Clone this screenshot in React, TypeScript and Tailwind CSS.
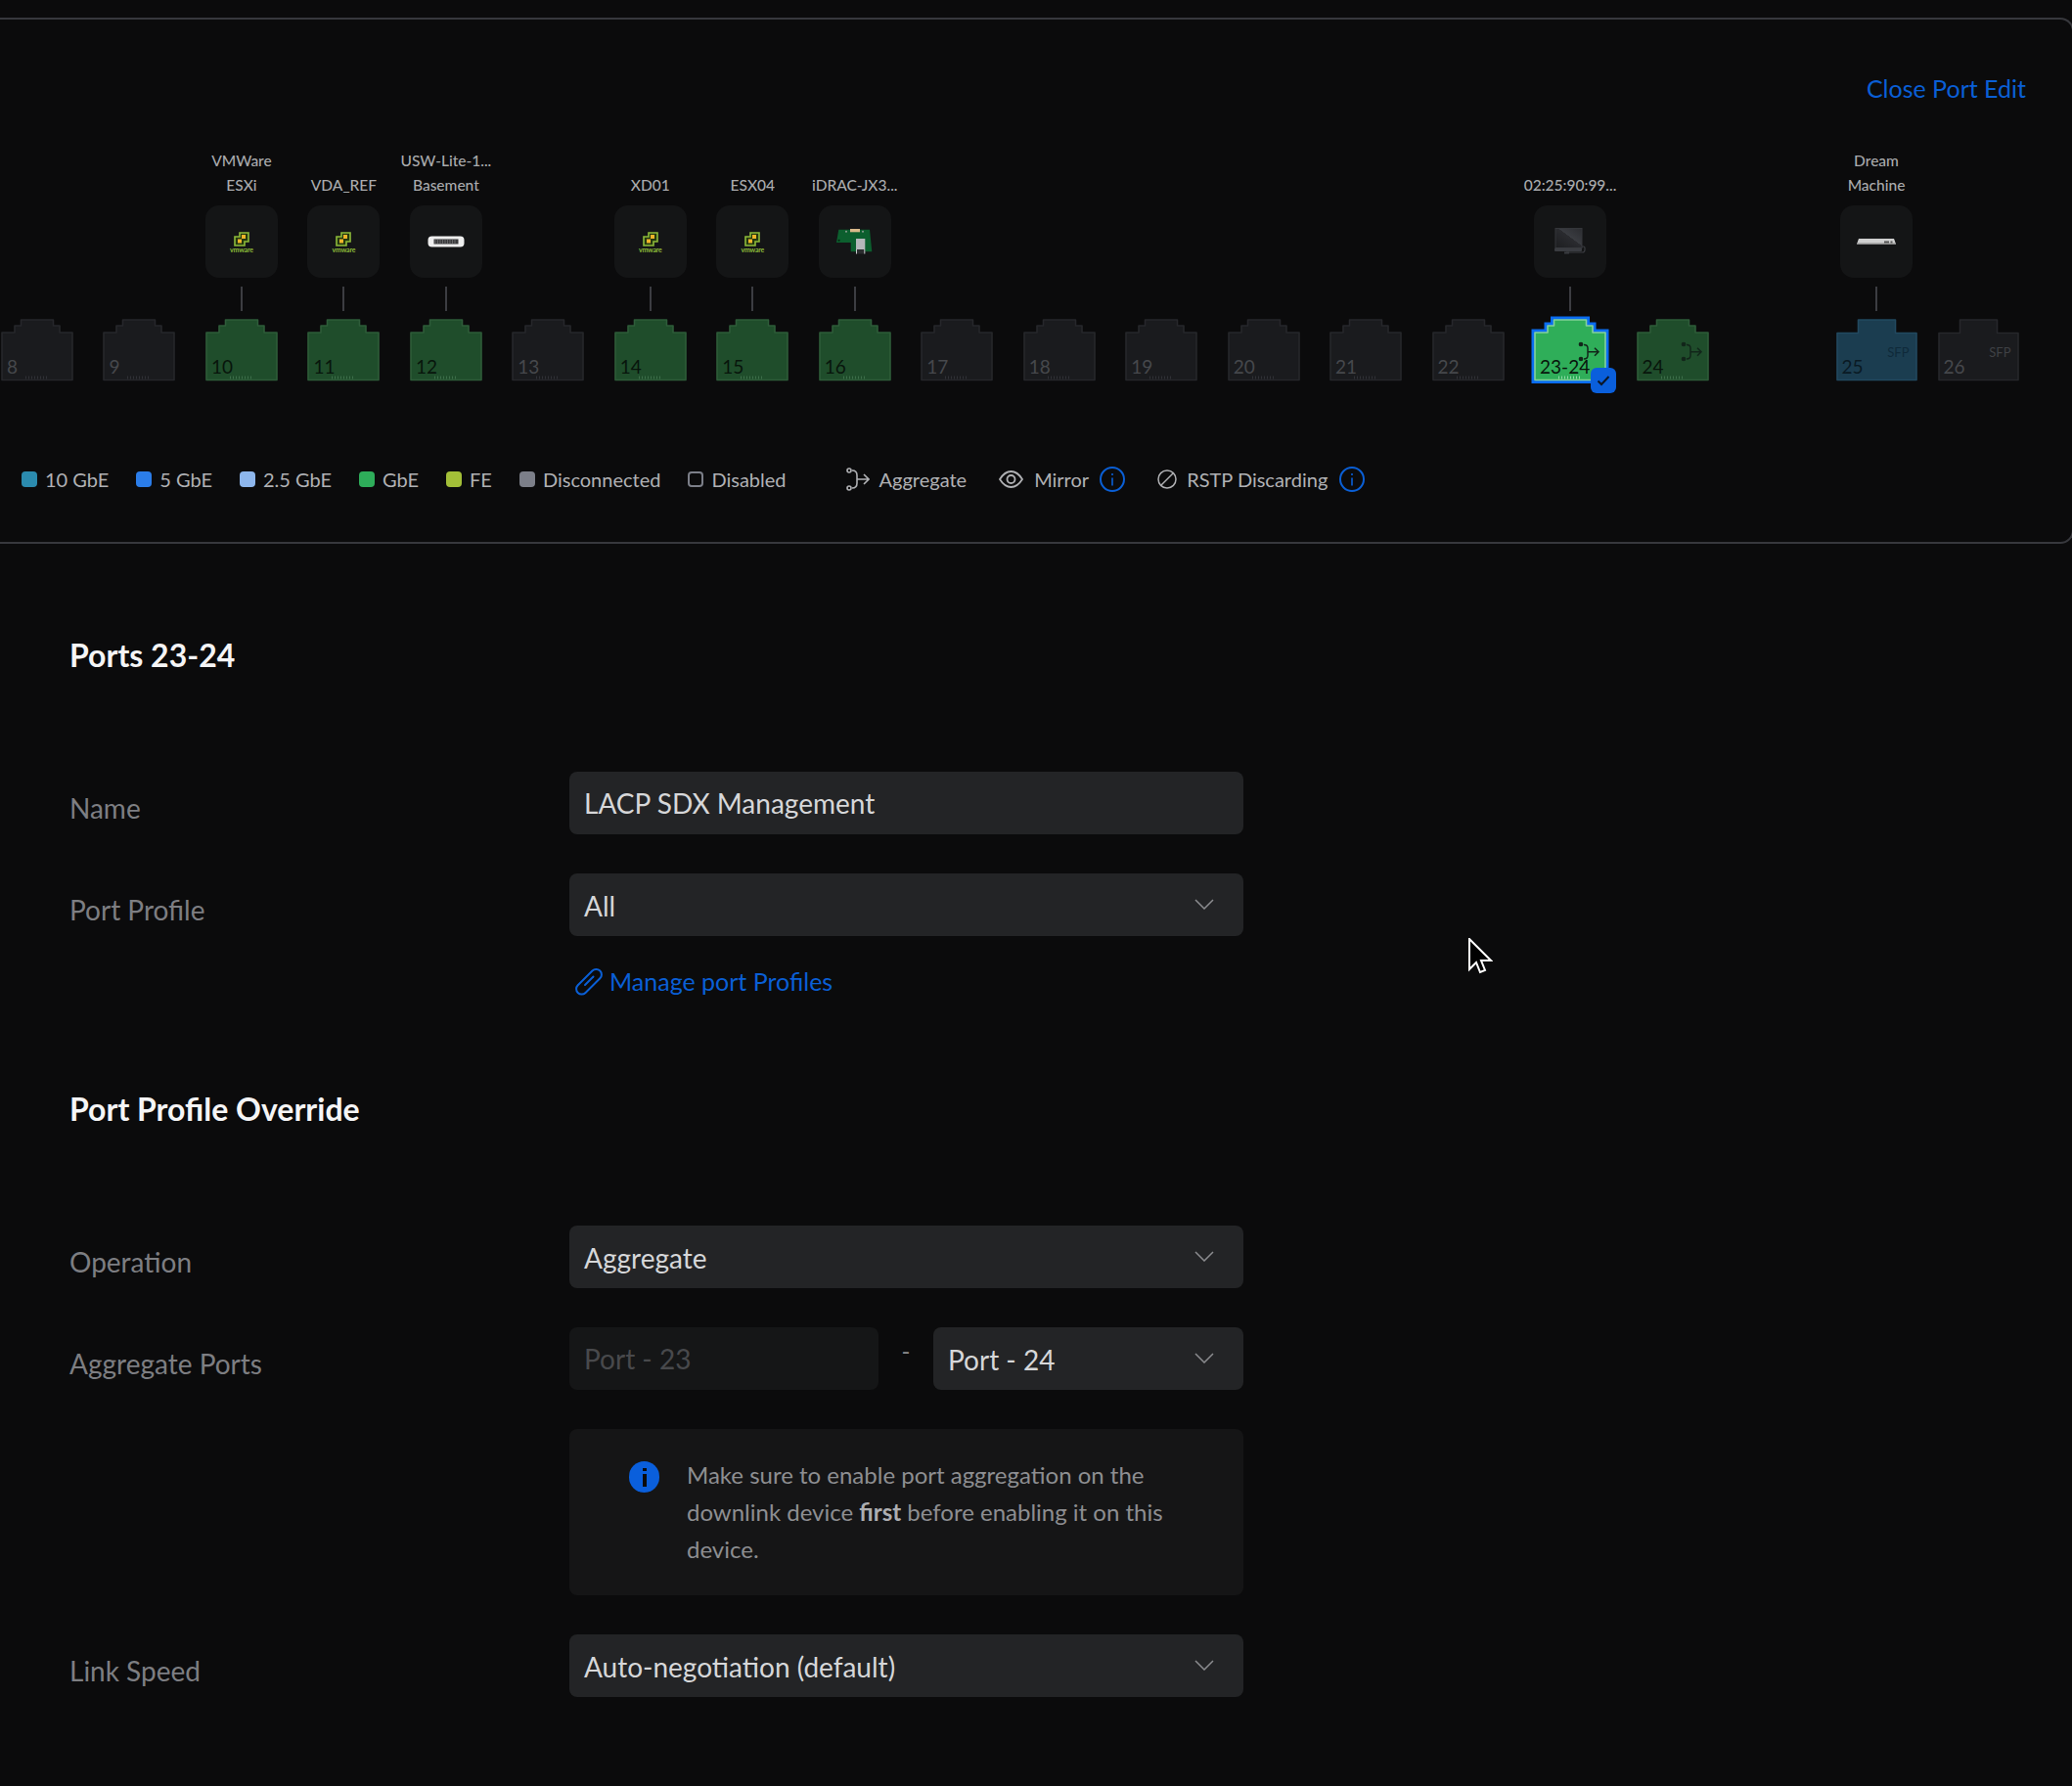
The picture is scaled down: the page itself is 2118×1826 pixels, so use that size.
type Port = {
  n: string;
  state: "off" | "on" | "sel";
  sfp?: boolean;
  agg?: boolean;
  device?: string[];
  icon?: "vm" | "switch" | "idrac" | "laptop" | "dream";
};

const ports: Port[] = [
  { n: "8", state: "off" },
  { n: "9", state: "off" },
  { n: "10", state: "on", device: ["VMWare", "ESXi"], icon: "vm" },
  { n: "11", state: "on", device: ["VDA_REF"], icon: "vm" },
  { n: "12", state: "on", device: ["USW-Lite-1...", "Basement"], icon: "switch" },
  { n: "13", state: "off" },
  { n: "14", state: "on", device: ["XD01"], icon: "vm" },
  { n: "15", state: "on", device: ["ESX04"], icon: "vm" },
  { n: "16", state: "on", device: ["iDRAC-JX3..."], icon: "idrac" },
  { n: "17", state: "off" },
  { n: "18", state: "off" },
  { n: "19", state: "off" },
  { n: "20", state: "off" },
  { n: "21", state: "off" },
  { n: "22", state: "off" },
  { n: "23-24", state: "sel", agg: true, device: ["02:25:90:99..."], icon: "laptop" },
  { n: "24", state: "on", agg: true },
];

const sfpPorts: Port[] = [
  { n: "25", state: "on", sfp: true, device: ["Dream", "Machine"], icon: "dream" },
  { n: "26", state: "off", sfp: true },
];

const legend = [
  { label: "10 GbE", color: "bg-[#2b8bae]" },
  { label: "5 GbE", color: "bg-[#2b7de9]" },
  { label: "2.5 GbE", color: "bg-[#8db6ec]" },
  { label: "GbE", color: "bg-[#2ead5a]" },
  { label: "FE", color: "bg-[#a3bf38]" },
  { label: "Disconnected", color: "bg-[#7c7f89]" },
  { label: "Disabled", color: "border-2 border-[#7c7f89]" },
];

function DeviceIcon({ icon }: { icon: Port["icon"] }) {
  if (icon === "vm") {
    return (
      <div className="flex flex-col items-center">
        <svg width="16" height="15" viewBox="0 0 16 15">
          <path d="M6 1h9v9h-4v4H1V5h5z" fill="#24380f" stroke="#8dbb3a" strokeWidth="1.6" />
          <rect x="8" y="3" width="4" height="4" fill="#f0b429" />
          <rect x="4" y="7.5" width="4" height="4" fill="#f0b429" />
        </svg>
        <span className="text-[7px] leading-[6px] text-[#8dbb3a] font-bold tracking-[-0.2px]">vmware</span>
      </div>
    );
  }
  if (icon === "switch") {
    return (
      <svg width="38" height="12" viewBox="0 0 38 12">
        <rect x="0.5" y="0.5" width="37" height="11" rx="4" fill="#eeeeee" />
        <rect x="6.5" y="3.5" width="25" height="5" fill="#3a3a3c" />
        <path d="M8 3.5v5M10.5 3.5v5M13 3.5v5M15.5 3.5v5M18 3.5v5M20.5 3.5v5M23 3.5v5M25.5 3.5v5M28 3.5v5" stroke="#8a8a8c" strokeWidth="0.6" />
      </svg>
    );
  }
  if (icon === "idrac") {
    return (
      <svg width="37" height="26" viewBox="0 0 37 26">
        <path d="M2.3 0.7H34L36.3 23.3H14.7V14H0Z" fill="#0c5f2e" />
        <rect x="14" y="0" width="10" height="3.3" fill="#d9b98a" />
        <circle cx="10" cy="2.7" r="1" fill="#8a9a90" />
        <circle cx="27" cy="2.7" r="1" fill="#8a9a90" />
        <circle cx="2.6" cy="11.7" r="1" fill="#06210f" />
        <rect x="20" y="10" width="9.3" height="11" fill="#b5b7ba" />
        <rect x="20" y="21" width="9.3" height="4.5" fill="#2a2c2e" />
        <path d="M20.5 21v4.5M28.8 21v4.5" stroke="#c9cbce" strokeWidth="1" />
      </svg>
    );
  }
  if (icon === "laptop") {
    return (
      <svg width="32" height="28" viewBox="0 0 32 28">
        <defs>
          <linearGradient id="screen" x1="0" y1="1" x2="1" y2="0">
            <stop offset="0" stopColor="#1c1d20" />
            <stop offset="0.55" stopColor="#2a2b2f" />
            <stop offset="0.56" stopColor="#3a3c41" />
            <stop offset="1" stopColor="#2b2c30" />
          </linearGradient>
        </defs>
        <rect x="1" y="0.5" width="27" height="20" fill="url(#screen)" stroke="#34363a" />
        <rect x="0" y="20.5" width="28" height="3.5" rx="1" fill="#3a3c41" />
        <path d="M28 19h1.5q1.5 0 1.5 1.5v2q0 2.5-2.5 2.5H12" fill="none" stroke="#3a3c41" strokeWidth="1.2" />
        <rect x="10" y="24.5" width="5" height="2" fill="#3a3c41" />
      </svg>
    );
  }
  return (
    <svg width="40" height="8" viewBox="0 0 40 8">
      <path d="M2 1h36l2 5.5H0z" fill="#cfcfcf" />
      <rect x="0" y="5.5" width="40" height="1.5" fill="#8e8e8e" />
      <rect x="28" y="3.5" width="5" height="2" fill="#555" />
      <rect x="34.5" y="3.5" width="2" height="2" fill="#555" />
    </svg>
  );
}

// the RJ45 / SFP outline of a single port
function PortShape({ port }: { port: Port }) {
  const w = port.sfp ? 83 : 74;
  const h = 63;
  const c = w / 2;
  const d = port.sfp
    ? `M1 62.5V14.5H${c - 19}V1H${c + 19}V14.5H${w - 1}V62.5Z`
    : `M1 62.5V14H14V7H20.5V1H53.5V7H60V14H73V62.5Z`;
  const fill = port.state === "sel" ? "#2fae59" : port.state === "off" ? "#1a1b1e" : port.sfp ? "#1b3d50" : "#1f4d2b";
  const stroke = port.state === "sel" ? "#84d19b" : port.state === "off" ? "#26272b" : port.sfp ? "#22495f" : "#2e5c39";
  const tick = port.state === "sel" ? "#8ed9a5" : port.state === "off" ? "#303136" : "#3c6e49";
  return (
    <svg width={w} height={h} viewBox={`0 0 ${w} ${h}`} className="overflow-visible block">
      {port.state === "sel" && <path d={d} fill="none" stroke="#0a6cf0" strokeWidth="7" strokeLinejoin="miter" />}
      <path d={d} fill={fill} stroke={stroke} strokeWidth="1.6" strokeLinejoin="round" />
      {!port.sfp && <path d={`M${c - 12} 60H${c + 12}`} stroke={tick} strokeWidth="3" strokeDasharray="1 2" />}
      {port.agg && (
        <g fill="none" stroke="#12261a" strokeWidth="1.5">
          <circle cx="48" cy="26" r="1.6" fill="#12261a" />
          <circle cx="48" cy="41" r="1.6" fill="#12261a" />
          <path d="M51 26.5q4 0 4 3.5v7.5q0 3.5-4 3.5M55 33.7H66M62 29.7l4 4-4 4" />
        </g>
      )}
    </svg>
  );
}

function PortColumn({ port }: { port: Port }) {
  const numColor = port.state === "off" ? "text-[#46484c]" : port.sfp ? "text-[#0a1a24]" : "text-[#08150c]";
  return (
    <div className={`flex flex-col items-center shrink-0 ${port.sfp ? "w-[83px]" : "w-[74px]"}`}>
      <div className="h-[60px] w-[120px] flex flex-col justify-end items-center text-[15.5px] leading-[25px] font-medium text-[#a9aaad] whitespace-nowrap -translate-y-px">
        {port.device?.map((line) => <div key={line}>{line}</div>)}
      </div>
      <div className="h-[7px]" />
      {port.device ? (
        <div className="w-[74px] h-[74px] rounded-[14px] bg-[#141516] flex items-center justify-center">
          <DeviceIcon icon={port.icon} />
        </div>
      ) : (
        <div className="h-[74px]" />
      )}
      <div className="h-[42px] flex justify-center pt-[9px]">
        {port.device && <div className="w-[2px] h-[25px] bg-[#3c3d42]" />}
      </div>
      <div className="relative">
        <PortShape port={port} />
        <span className={`absolute left-[6px] bottom-[2px] text-[19px] leading-[24px] ${numColor} whitespace-nowrap`}>{port.n}</span>
        {port.sfp && (
          <span className={`absolute right-[8px] top-[27px] text-[13px] leading-[14px] ${port.state === "off" ? "text-[#3f4145]" : "text-[#0f2a3a]"}`}>SFP</span>
        )}
        {port.state === "sel" && (
          <div className="absolute right-[-10px] bottom-[-13px] w-[26px] h-[26px] rounded-[6px] bg-[#0a5fdc] flex items-center justify-center">
            <svg width="14" height="12" viewBox="0 0 14 12">
              <path d="M1.5 6.5l3.5 3.5 7.5-8" fill="none" stroke="#0b1626" strokeWidth="2" />
            </svg>
          </div>
        )}
      </div>
    </div>
  );
}

function InfoOutline() {
  return (
    <svg width="26" height="26" viewBox="0 0 26 26" className="text-[#0a5fd6]">
      <circle cx="13" cy="13" r="12" fill="none" stroke="currentColor" strokeWidth="2" />
      <path d="M13 11.5v8M13 7v2" stroke="currentColor" strokeWidth="1.6" />
    </svg>
  );
}

function Select({ value, className = "w-[689px]" }: { value: string; className?: string }) {
  return (
    <div className={`h-[64px] rounded-[8px] bg-[#232426] flex items-center justify-between pl-[15px] pr-[30px] ${className}`}>
      <span className="text-[28px] text-[#d6d7d9] pt-[2px]">{value}</span>
      <svg width="20" height="11" viewBox="0 0 20 11" fill="none" stroke="#8b8c8f" strokeWidth="1.5" className="-mt-[2px]">
        <path d="M1 1l9 9 9-9" />
      </svg>
    </div>
  );
}

function Row({ label, children }: { label: string; children: React.ReactNode }) {
  return (
    <div className="flex items-start">
      <div className="w-[582px] shrink-0 pl-[71px] pt-[15px] text-[28px] leading-[44px] text-[#7d7e82]">{label}</div>
      {children}
    </div>
  );
}

export default function App() {
  return (
    <div className="relative min-h-[1826px] bg-[#0b0b0c] font-['Lato',sans-serif] overflow-hidden">
      <div className="h-[18px]" />
      {/* Port panel, its right edge runs just past the window */}
      <div className="h-[538px] border-y-2 border-r-2 border-[#37383d] rounded-r-[14px] -mr-[2px]">
        <div className="flex justify-end pr-[47px] pt-[50px] h-[90px]">
          <span className="text-[25px] leading-[40px] text-[#0a5fd6]">Close Port Edit</span>
        </div>
        <div className="flex pl-[1px] mt-[33px]">
          <div className="flex gap-[30.47px]">
            {ports.map((p) => <PortColumn key={p.n + p.state} port={p} />)}
          </div>
          <div className="flex gap-[21px] ml-[130px]">
            {sfpPorts.map((p) => <PortColumn key={p.n} port={p} />)}
          </div>
        </div>
        {/* Legend */}
        <div className="flex items-center h-[26px] mt-[88px] pl-[22px] text-[20px] text-[#b0b1b4]">
          <div className="flex items-center gap-[28px]">
            {legend.map((l) => (
              <div key={l.label} className="flex items-center gap-[8px]">
                <span className={`w-[16px] h-[16px] rounded-[4px] ${l.color}`} />
                <span>{l.label}</span>
              </div>
            ))}
          </div>
          <div className="flex items-center gap-[10px] ml-[61px]">
            <svg width="24" height="26" viewBox="0 0 24 26" fill="none" stroke="#b0b1b4" strokeWidth="1.6">
              <circle cx="3" cy="4" r="2" />
              <circle cx="3" cy="22" r="2" />
              <path d="M6 4q5 0 5 5v8q0 5-5 5M11 13h12M18 8l5 5-5 5" />
            </svg>
            <span>Aggregate</span>
          </div>
          <div className="flex items-center gap-[11px] ml-[33px]">
            <svg width="25" height="20" viewBox="0 0 25 20" fill="none" stroke="#b0b1b4" strokeWidth="1.8">
              <path d="M1 10q5-8 11.5-8T24 10q-5 8-11.5 8T1 10z" />
              <circle cx="12.5" cy="10" r="4" />
            </svg>
            <span>Mirror</span>
            <InfoOutline />
          </div>
          <div className="flex items-center gap-[10px] ml-[33px]">
            <svg width="20" height="20" viewBox="0 0 20 20" fill="none" stroke="#b0b1b4" strokeWidth="1.5">
              <circle cx="10" cy="10" r="9" />
              <path d="M4 16L16 4" />
            </svg>
            <span>RSTP Discarding</span>
            <span className="ml-[2px] flex"><InfoOutline /></span>
          </div>
        </div>
      </div>

      {/* Form */}
      <div className="pt-[90px]">
        <h2 className="pl-[71px] text-[32px] leading-[48px] font-bold text-[#f5f5f6]">Ports 23-24</h2>
        <div className="mt-[95px] flex flex-col gap-[40px]">
          <Row label="Name">
            <div className="w-[689px] h-[64px] rounded-[8px] bg-[#232426] flex items-center pl-[15px] text-[28px] text-[#d6d7d9]">LACP SDX Management</div>
          </Row>
          <Row label="Port Profile">
            <div>
              <Select value="All" />
              <div className="flex items-center gap-[6px] pl-[5px] mt-[26px] text-[25px] leading-[40px] text-[#0a5fd6]">
                <svg width="30" height="30" viewBox="0 0 30 30" fill="none" stroke="currentColor" strokeWidth="2" strokeLinecap="round">
                  <path d="M8 15L18.5 4.5a5.5 5.5 0 0 1 7.8 7.8L11.5 27a5.5 5.5 0 0 1-7.8-7.8L8 15" />
                  <path d="M11 19L19.5 10.5" />
                </svg>
                <span>Manage port Profiles</span>
              </div>
            </div>
          </Row>
        </div>
        <h2 className="pl-[71px] mt-[87px] text-[32px] leading-[48px] font-bold text-[#f5f5f6]">Port Profile Override</h2>
        <div className="mt-[95px] flex flex-col gap-[40px]">
          <Row label="Operation">
            <Select value="Aggregate" />
          </Row>
          <Row label="Aggregate Ports">
            <div className="w-[689px]">
              <div className="flex items-start">
                <div className="w-[316px] h-[64px] rounded-[8px] bg-[#151617] flex items-center pl-[15px] text-[28px] text-[#48494c]">Port - 23</div>
                <div className="w-[56px] text-center text-[24px] leading-[36px] pt-[6px] text-[#8b8c8f]">-</div>
                <Select value="Port - 24" className="w-[317px]" />
              </div>
              <div className="mt-[40px] h-[170px] rounded-[8px] bg-[#151516] flex pl-[61px] pt-[28px] gap-[28px]">
                <div className="w-[31px] h-[32px] mt-[5px] rounded-full bg-[#0a5fdc] flex items-center justify-center shrink-0">
                  <svg width="6" height="20" viewBox="0 0 6 20"><path d="M3 7v13M3 1v3" stroke="#0b0b0c" strokeWidth="4" /></svg>
                </div>
                <p className="w-[520px] text-[24px] leading-[38px] text-[#8d8e91]">
                  Make sure to enable port aggregation on the downlink device <b className="text-[#adaeb1]">first</b> before enabling it on this device.
                </p>
              </div>
            </div>
          </Row>
          <Row label="Link Speed">
            <Select value="Auto-negotiation (default)" />
          </Row>
        </div>
      </div>

      {/* mouse pointer from the capture */}
      <svg width="26" height="38" viewBox="0 0 26 38" className="absolute left-[1500px] top-[959px]">
        <path d="M2 1V32L9 25L13 35L18 33L14 23H24Z" fill="#000" stroke="#fff" strokeWidth="2" />
      </svg>
    </div>
  );
}
